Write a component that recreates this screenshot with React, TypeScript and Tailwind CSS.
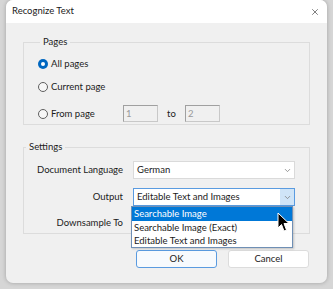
import React from 'react';
import { X, ChevronDown } from 'lucide-react';

const font = { fontFamily: '"Segoe UI", Lato, "Liberation Sans", sans-serif' };

const Radio: React.FC<{ checked?: boolean; label: string }> = ({ checked, label }) => (
  <label className="flex items-center gap-[3px]">
    {checked ? (
      <span className="w-[10px] h-[10px] rounded-full bg-[#0067c0] flex items-center justify-center">
        <span className="w-[4px] h-[4px] rounded-full bg-white" />
      </span>
    ) : (
      <span className="w-[10px] h-[10px] rounded-full border border-[#5f5f5f] bg-[#f7f7f7]" />
    )}
    <span>{label}</span>
  </label>
);

const Combo: React.FC<{ value: string; focused?: boolean }> = ({ value, focused }) => (
  <div
    className={`w-[162px] h-[18px] flex items-center bg-white border ${
      focused ? 'border-[#5a9be0]' : 'border-[#dadada]'
    }`}
  >
    <span className="flex-1 pl-[3px] truncate">{value}</span>
    <span
      className={`w-[14px] h-full flex items-center justify-center ${focused ? 'bg-[#cfe4f7]' : ''}`}
    >
      <ChevronDown className="w-[9px] h-[9px] text-[#7a7a7a]" strokeWidth={2} />
    </span>
  </div>
);

const App: React.FC = () => {
  return (
    <div className="w-[333px] h-[289px] bg-[#d6d6d6] px-[6px] pb-[6px] text-[9.5px] text-[#1b1b1b]" style={font}>
      <div className="relative h-full rounded-[7px] bg-[#f0f0f0] shadow-[0_0_4px_rgba(0,0,0,0.25)] overflow-hidden flex flex-col">
        {/* Title bar */}
        <div className="h-[23px] bg-white flex items-center justify-between pl-[6px] pr-[7px]">
          <span>Recognize Text</span>
          <X className="w-[10px] h-[10px] text-[#333]" strokeWidth={1.5} />
        </div>

        <div className="flex-1 flex flex-col px-[17px] pt-[12px]">
          {/* Pages */}
          <fieldset className="border border-[#dcdcdc] h-[90px] w-[287px] px-[14px]">
            <legend className="ml-[2px] px-[3px]">Pages</legend>
            <div className="flex flex-col pt-[8px]">
              <div className="h-[13px] flex items-center">
                <Radio checked label="All pages" />
              </div>
              <div className="h-[13px] mt-[10px] flex items-center">
                <Radio label="Current page" />
              </div>
              <div className="flex items-center h-[17px] mt-[12px]">
                <div className="w-[85px]">
                  <Radio label="From page" />
                </div>
                <div className="w-[35px] h-[17px] border border-[#c8c8c8] border-t-[#a0a0a0] border-l-[#a0a0a0] bg-[#f0f0f0] text-[#9a9a9a] pl-[2px] leading-[15px]">
                  1
                </div>
                <span className="w-[27px] text-center">to</span>
                <div className="w-[35px] h-[17px] border border-[#c8c8c8] border-t-[#a0a0a0] border-l-[#a0a0a0] bg-[#f0f0f0] text-[#9a9a9a] pl-[2px] leading-[15px]">
                  2
                </div>
              </div>
            </div>
          </fieldset>

          {/* Settings */}
          <fieldset className="mt-[15px] border border-[#dcdcdc] h-[94px] w-[287px]">
            <legend className="ml-[2px] px-[3px]">Settings</legend>
            <div className="flex flex-col pt-[7px]">
              <div className="h-[18px] flex items-center">
                <span className="w-[99px] text-right">Document Language</span>
                <span className="ml-[10px]"><Combo value="German" /></span>
              </div>
              <div className="h-[18px] mt-[9px] flex items-center">
                <span className="w-[99px] text-right">Output</span>
                <span className="ml-[10px]"><Combo value="Editable Text and Images" focused /></span>
              </div>
              <div className="h-[18px] mt-[8px] flex items-center">
                <span className="w-[99px] text-right">Downsample To</span>
              </div>
            </div>
          </fieldset>

          {/* Buttons */}
          <div className="flex justify-end gap-[11px] mt-[16px] pr-[1px]">
            <button className="w-[81px] h-[18px] rounded-[3px] border border-[#5a9be0] bg-[#f7fafd]">OK</button>
            <button className="w-[81px] h-[18px] rounded-[3px] border border-[#dcdcdc] bg-white">Cancel</button>
          </div>
        </div>

        {/* Dropdown list */}
        <div className="absolute left-[125px] top-[206px] w-[162px] bg-white border border-[#6f8fb5] shadow-[1px_1px_2px_rgba(0,0,0,0.2)]">
          <div className="h-[14px] leading-[14px] pl-[2px] bg-[#0078d7] text-white">Searchable Image</div>
          <div className="h-[13px] leading-[13px] pl-[2px]">Searchable Image (Exact)</div>
          <div className="h-[13px] leading-[13px] pl-[2px]">Editable Text and Images</div>
        </div>

        {/* Cursor */}
        <svg className="absolute left-[271px] top-[212px]" width="14" height="21" viewBox="0 0 14 21">
          <path d="M1 1 L1 16 L4.5 12.5 L7 19 L9.5 18 L7 11.5 L12 11.5 Z" fill="#000" stroke="#fff" strokeWidth="1" />
        </svg>
      </div>
    </div>
  );
};

export default App;
